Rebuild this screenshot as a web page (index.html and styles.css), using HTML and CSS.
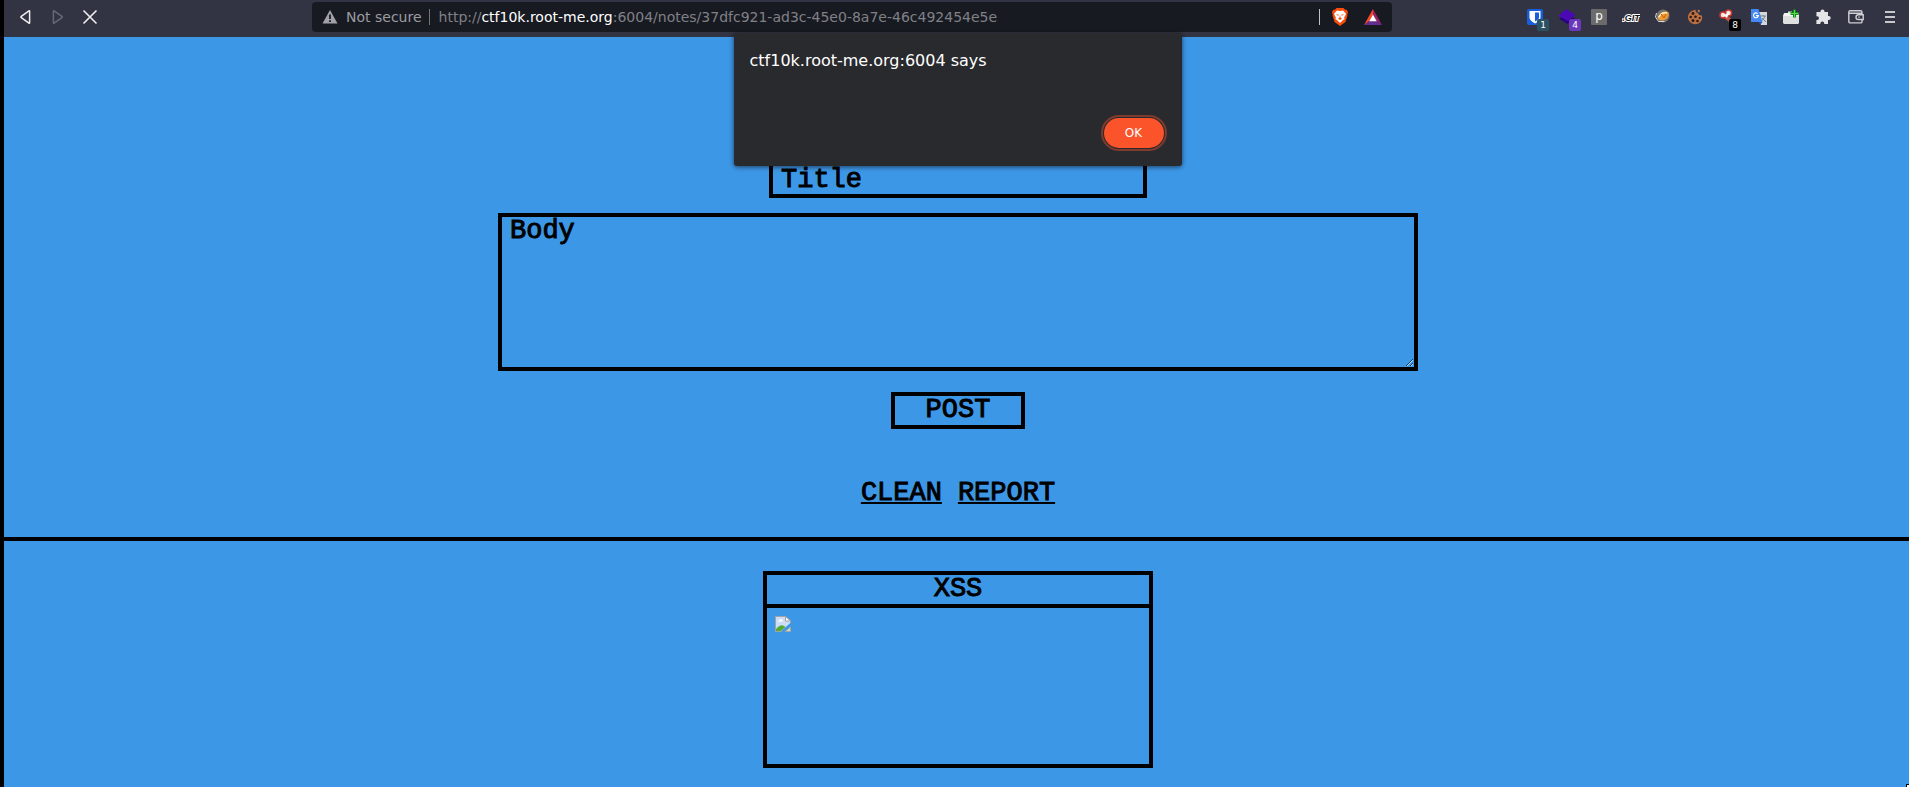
FILE: index.html
```html
<!DOCTYPE html>
<html lang="en">
<head>
<meta charset="utf-8">
<title>Notes</title>
<link rel="stylesheet" href="styles.css">
</head>
<body>
<div class="window">
  <header class="toolbar">
    <nav class="nav" aria-label="Browser navigation">
      <button class="tool" aria-label="Back"><svg width="16" height="16" viewBox="0 0 16 16"><path d="M11.6 2.2v11.6q0 .7-.7.3L3.3 8.6q-.8-.6 0-1.2l7.600-5.500q.7-.4.7.3z" fill="none" stroke="#eeeeef" stroke-width="1.500"/></svg></button>
      <button class="tool" aria-label="Forward"><svg width="16" height="16" viewBox="0 0 16 16"><path d="M3.400 2.200v11.600q0 .7.7.3l7.800-5.500q.8-.6 0-1.200L4.100 1.900q-.7-.4-.7.3z" fill="none" stroke="#666874" stroke-width="1.500"/></svg></button>
      <button class="tool" aria-label="Stop"><svg width="16" height="16" viewBox="0 0 16 16"><path d="M1.500 1.500l13 13M14.500 1.500l-13 13" stroke="#eeeeef" stroke-width="1.600"/></svg></button>
    </nav>
    <div class="address">
      <svg width="16" height="16" viewBox="0 0 16 16"><path d="M8 1l7.500 13.500H.5z" fill="#a0a2a8"/><path d="M8 5.500v4.500M8 11.200v1.800" stroke="#181a22" stroke-width="1.800"/></svg>
      <span class="security">Not secure</span>
      <span class="divider"></span>
      <span class="url">http://<span class="host">ctf10k.root-me.org</span>:6004/notes/37dfc921-ad3c-45e0-8a7e-46c492454e5e</span>
      <span class="divider divider-light"></span>
      <button class="tool" aria-label="Brave Shields"><svg width="16" height="18" viewBox="0 0 16 18"><path d="M4.500 0h7l1.600 1.700 1.700.1L16 4.200l-.7 2 .1 1.500-2 6.300L8 18l-5.400-4L.6 7.700l.1-1.500L0 4.200l1.200-2.400 1.700-.1z" fill="#fb4b0a"/><path d="M5 2.500l3 .6 3-.6 3 3.200-1 2.200-.8 1.400.3 1.600-2 1.500L8 15l-2.500-2.600-2-1.500.3-1.600L3 7.900 2 5.700z" fill="#fff"/><path d="M3.800 6l2.800.8-.3 1.200zM12.200 6l-2.800.8.3 1.200zM8 7l.6 2.800L10 10.700 8 12l-2-1.300 1.400-.9z" fill="#fb4b0a"/></svg></button>
      <button class="tool" aria-label="Rewards"><svg width="18" height="16" viewBox="0 0 18 16"><path d="M9 0v5.500L5.300 12 0 16z" fill="#ff4724"/><path d="M9 0l9 16-5.300-4L9 5.500z" fill="#9e1f63"/><path d="M0 16l5.300-4h7.400l5.300 4z" fill="#662d91"/><path d="M9 5.500l3.800 6.700H5.200z" fill="#fff"/></svg></button>
    </div>
    <div class="extensions">
      <button class="tool" aria-label="Password manager"><svg width="16" height="16" viewBox="0 0 16 16"><rect width="16" height="16" rx="2" fill="#175ddc"/><path d="M2.500 2h11v6.500q0 3-5.500 6-5.500-3-5.500-6z" fill="#fff"/><path d="M8 3.600h4v5q0 1.900-4 4z" fill="#175ddc"/></svg><span class="badge badge-teal">1</span></button>
      <button class="tool" aria-label="Layers"><svg width="16" height="16" viewBox="0 0 16 16"><path d="M0 9.500L7.500 6 16 9.500 8.500 15z" fill="#290080"/><path d="M0 6L7.500.2 16 5.500v1L8.500 12 0 7z" fill="#4b08b5"/></svg><span class="badge badge-purple">4</span></button>
      <button class="tool" aria-label="Proxy"><span class="tile">p</span></button>
      <button class="tool" aria-label="Git finder"><svg width="18" height="16" viewBox="0 0 18 16"><text class="git" x="9" y="12" text-anchor="middle">.GIT</text></svg></button>
      <button class="tool" aria-label="Cookie editor"><svg width="16" height="16" viewBox="0 0 16 16"><circle cx="8" cy="7" r="6.500" fill="#77736e"/><path d="M2.500 9.500Q6 1 13.500 3q1 4-2 7-5 3-9-.5z" fill="#ed9b32"/><path d="M3.500 8.500Q6.500 2.500 12 4" fill="none" stroke="#fff0c4" stroke-width="1.400"/><path d="M6 5l3 4 2-4" fill="none" stroke="#c35d0c"/><path d="M1.500 4l-1 4 3 4.500h6" fill="none" stroke="#ddd8d0"/></svg></button>
      <button class="tool" aria-label="Cookies"><svg width="16" height="16" viewBox="0 0 16 16"><path d="M8.500.8q0 3 2.500 3.200.5 2.500 3.800 2.500Q16 10 13.500 13 10 16.500 5 14.500.5 12 1 7 2.500 1.500 8.500.8z" fill="#bc7042"/><g fill="#291a15"><circle cx="6" cy="4.500" r="1.400"/><circle cx="3.700" cy="8" r="1.300"/><circle cx="8.500" cy="7.700" r="1.300"/><circle cx="6" cy="11.500" r="1.500"/><circle cx="10.500" cy="12" r="1.300"/><circle cx="12.700" cy="9" r="1.100"/></g><circle cx="11.800" cy="2" r="1.200" fill="#bc7042"/></svg></button>
      <button class="tool" aria-label="Blocker"><svg width="16" height="16" viewBox="0 0 16 16"><path d="M6 7l8 7" stroke="#c9514a" stroke-width="4"/><g fill="#f1e8e8" stroke="#c9382f" stroke-width="1.500"><circle cx="4" cy="6" r="3"/><circle cx="9.500" cy="4" r="3"/></g><path d="M4 6l6-2-2 5z" fill="#fff"/></svg><span class="badge badge-black">8</span></button>
      <button class="tool" aria-label="Translate"><svg width="16" height="16" viewBox="0 0 16 16"><path d="M6 3h10v13h-6z" fill="#d6d8d8"/><path d="M9 7h6M12 6v1M14 7q-1 4-4 5M11 9l4 4" stroke="#6d8790" fill="none"/><path d="M0 0h7.500l4 13H0z" fill="#4688f1"/><path d="M8 13h3.500L9 16z" fill="#2856bc"/><path d="M6.600 4.600a2.400 2.400 0 1 0 .7 2.100H5" stroke="#fff" stroke-width="1.200" fill="none"/></svg></button>
      <button class="tool" aria-label="Add container"><svg width="16" height="16" viewBox="0 0 16 16"><path d="M1 4h4V2.500h4V4h5l2 1v9l-1 1H1l-1-1V7z" fill="#dedfdf"/><path d="M2 4h11l2 3H0z" fill="#f5f5f5"/><path d="M7.500 4.500h8M11.500.500v8" stroke="#108c19" stroke-width="3"/><path d="M8 4.500h7M11.500 1v7" stroke="#5dda4c"/></svg></button>
      <button class="tool" aria-label="Extensions"><svg width="16" height="16" viewBox="0 0 16 16"><path d="M1.500 3h4V2.500a2 2 0 0 1 4 0V3H13v4h.7a2 2 0 0 1 0 4H13v4H9.200v-.7a1.900 1.900 0 0 0-3.800 0v.7h-4v-4h.7a1.900 1.900 0 0 0 0-3.800h-.7z" fill="#e5e5e7"/></svg></button>
      <button class="tool tool-wide" aria-label="Wallet"><svg width="16" height="14" viewBox="0 0 16 14"><path d="M14 4V3q0-2.200-1.200-2.200H2.200Q.8.800.8 2.200v9.200q0 1.500 1.500 1.500h10.500Q14 12.900 14 11.700V10M1 3.200h12.500M15.200 4.800h-5Q8 5 8 7.200t2.200 2.300h5z" fill="none" stroke="#cfcfd3" stroke-width="1.400"/><circle cx="11" cy="7.100" r=".8" fill="#cfcfd3"/></svg></button>
      <button class="tool tool-wide" aria-label="Menu"><svg width="10" height="12" viewBox="0 0 10 12"><path d="M0 1h10M0 6h10M0 11h10" stroke="#c7c8cc" stroke-width="2"/></svg></button>
    </div>
  </header>

  <main class="page">
    <form class="composer">
      <input class="box title" type="text" placeholder="Title" aria-label="Title">
      <textarea class="box body" placeholder="Body" aria-label="Body"></textarea>
      <button class="box post" type="button">POST</button>
      <div class="links"><a href="#clean">CLEAN</a><a href="#report">REPORT</a></div>
    </form>
    <section class="notes">
      <article class="note">
        <h2 class="note-title">XSS</h2>
        <div class="note-body">
          <svg width="16" height="16" viewBox="0 0 16 16" role="img" aria-label="Broken image"><path d="M.5.500h10L15.500 5v3.500l-8 7H.5z" fill="#cbdcf8" stroke="#a3a3a3"/><path d="M2 5.500q1-1 2-.8Q5 2 7 3.500q1 .2 1 2z" fill="#fff"/><path d="M1 15v-2q5-6.500 9.500-2L6 15z" fill="#55ab32"/><path d="M10.500.500V5h5z" fill="#fff" stroke="#a3a3a3"/><path d="M10 15.500l5.500-4.500v4.500z" fill="#c6dfc2" stroke="#a3a3a3"/><path d="M16 7.800l-9 8" stroke="#3d97e7" stroke-width="2"/></svg>
        </div>
      </article>
    </section>
  </main>

  <div class="alert" role="alertdialog" aria-labelledby="alert-title">
    <p class="alert-title" id="alert-title">ctf10k.root-me.org:6004 says</p>
    <button class="alert-ok">OK</button>
  </div>
  <span class="corner"></span>
</div>
</body>
</html>
```
FILE: styles.css
```css
* { box-sizing: border-box; }

body {
  margin: 0;
  font-family: "DejaVu Sans", sans-serif;
}

button {
  font: inherit;
  cursor: pointer;
}

.window {
  position: relative;
  display: flex;
  flex-direction: column;
  min-height: 100vh;
  overflow: hidden;
  border-left: 4px solid #000;
  background: #3d97e7;
}

.toolbar {
  display: grid;
  grid-template-columns: 308px minmax(0, 1fr) 517px;
  padding: 2px 0 5px;
  background: #323443;
}

.nav, .extensions {
  display: flex;
  align-items: center;
}

.nav { padding-left: 6px; }

.extensions {
  justify-content: flex-end;
  padding-right: 2px;
}

.tool {
  position: relative;
  display: flex;
  align-items: center;
  justify-content: center;
  flex: none;
  width: 32px;
  height: 30px;
  padding: 0;
  border: 0;
  background: none;
}

.tool-wide { width: 34px; }

.address {
  display: flex;
  align-items: center;
  height: 30px;
  padding: 0 3px 0 10px;
  border-radius: 4px;
  background: #181a22;
  color: #808186;
  font-size: 14px;
  white-space: nowrap;
}

.security {
  margin-left: 8px;
  color: #9a9ca2;
}

.divider {
  flex: none;
  width: 1px;
  height: 16px;
  margin: 0 9px 0 7px;
  background: #73757b;
}

.divider-light {
  margin: 0 3px;
  background: #c0c1c4;
}

.address .tool { width: 33px; }

.url {
  flex: 1;
  overflow: hidden;
}

.host { color: #fff; }

.badge {
  position: absolute;
  left: 18px;
  top: 17px;
  width: 12px;
  height: 12px;
  border-radius: 2px;
  color: #fff;
  font-size: 9px;
  line-height: 12px;
}

.badge-teal { background: #2b5263; }
.badge-purple { background: #6b38bb; }
.badge-black { background: #000; }

.tile {
  width: 16px;
  height: 16px;
  border-radius: 1px;
  background: #6b6b6b;
  color: #fff;
  font-size: 12px;
  line-height: 14px;
}

.git {
  font: italic bold 9px "Liberation Sans", sans-serif;
  fill: #111;
  stroke: #fff;
  stroke-width: 2px;
  paint-order: stroke;
}

.page {
  flex: 1;
  color: #000;
  font: 27px "Liberation Mono", monospace;
  -webkit-text-stroke: 1px #000;
}

.composer {
  display: flex;
  flex-direction: column;
  align-items: center;
  padding: 124px 0 30px 3px;
  border-bottom: 4px solid #000;
}

.box {
  max-width: 100%;
  border: 4px solid #000;
  border-radius: 0;
  outline: 0;
  background: transparent;
  color: #000;
  font: inherit;
  line-height: 29px;
  -webkit-text-stroke: inherit;
}

.box::placeholder {
  color: #000;
  opacity: 1;
}

.title {
  width: 378px;
  height: 37px;
  padding: 0 8px;
}

.body {
  display: block;
  width: 920px;
  height: 158px;
  margin-top: 15px;
  padding: 0 8px;
}

.post {
  width: 134px;
  height: 37px;
  margin-top: 21px;
  padding: 0;
}

.links {
  display: flex;
  gap: 16px;
  margin-top: 50px;
  line-height: 28px;
}

.links a {
  color: #000;
  text-decoration-thickness: 2px;
  text-underline-offset: 2px;
}

.notes {
  display: flex;
  justify-content: center;
  padding: 30px 0 16px 3px;
}

.note {
  width: 390px;
  border: 4px solid #000;
}

.note-title {
  margin: 0;
  border-bottom: 4px solid #000;
  font: inherit;
  line-height: 29px;
  text-align: center;
}

.note-body {
  display: flex;
  align-items: flex-start;
  min-height: 156px;
  padding: 8px;
}

.alert {
  position: absolute;
  top: 33px;
  left: 50%;
  display: flex;
  flex-direction: column;
  justify-content: space-between;
  width: 448px;
  height: 133px;
  margin-left: -223px;
  padding: 18px 18px 18px 16px;
  border-radius: 3px;
  background: #292a2e;
  box-shadow: 0 1px 5px rgba(0, 0, 0, .6);
  color: #fff;
}

.alert-title {
  margin: 0;
  font-size: 16px;
  line-height: 20px;
}

.alert-ok {
  align-self: flex-end;
  width: 60px;
  height: 30px;
  padding: 0;
  border: 0;
  border-radius: 15px;
  outline: 2px solid #7d3a2d;
  outline-offset: 1px;
  background: #fb542b;
  color: #fff;
  font-size: 12px;
}

.corner {
  position: absolute;
  right: 0;
  bottom: 0;
  width: 3px;
  height: 3px;
  border-top: 1px solid #000;
  border-left: 1px solid #000;
  background: #fff;
}
```
